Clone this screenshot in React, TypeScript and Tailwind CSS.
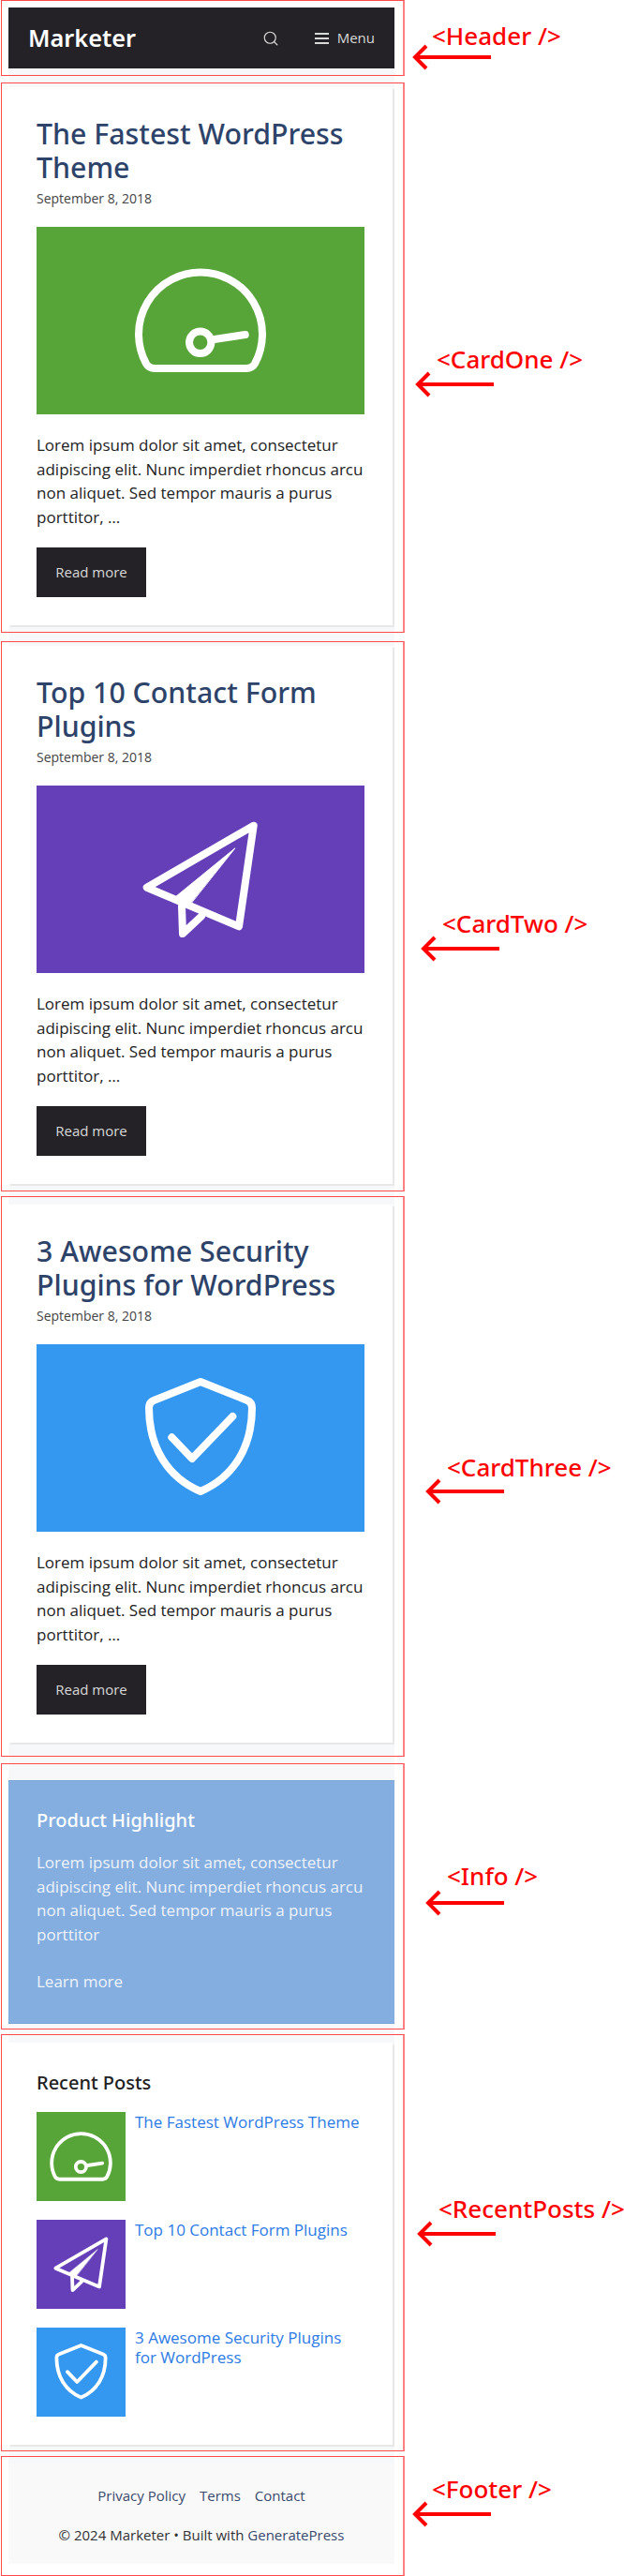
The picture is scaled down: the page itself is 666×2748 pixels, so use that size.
import React from 'react';
import { Search } from 'lucide-react';

const SpeedIcon = ({ className }: { className: string }) => (
  <svg viewBox="0 0 350 200" className={className} fill="none" stroke="#fff" strokeWidth="8" strokeLinecap="round" strokeLinejoin="round">
    <path d="M126 151H224Q230 151 233 146A66 66 0 1 0 117 146Q120 151 126 151Z" />
    <circle cx="174.7" cy="123.3" r="11.7" />
    <path d="M189.7 120L222.7 115" />
  </svg>
);

const PlaneIcon = ({ className }: { className: string }) => (
  <svg viewBox="0 0 350 200" className={className} fill="none" stroke="#fff" strokeWidth="8" strokeLinecap="round" strokeLinejoin="round">
    <path d="M231.7 42.7L117.7 108.7L216 150.3Z" />
    <path d="M155 128.7L156 158L176 139.3" />
    <path d="M211.7 67L148.3 118.7L164.3 126Z" fill="#fff" strokeWidth="1" />
  </svg>
);

const ShieldIcon = ({ className }: { className: string }) => (
  <svg viewBox="0 0 350 200" className={className} fill="none" stroke="#fff" strokeWidth="8" strokeLinecap="round" strokeLinejoin="round">
    <path d="M175 40L125 60Q120 62 120 68C120 110 140 142 175 157C210 142 230 110 230 68Q230 62 225 60Z" />
    <path d="M144.3 99.3L166 122L209.3 77" />
  </svg>
);

const posts = [
  { title: 'The Fastest WordPress Theme', bg: 'bg-[#57a438]', Icon: SpeedIcon },
  { title: 'Top 10 Contact Form Plugins', bg: 'bg-[#653fb7]', Icon: PlaneIcon },
  { title: '3 Awesome Security Plugins for WordPress', bg: 'bg-[#3498f0]', Icon: ShieldIcon },
];

const Header = () => (
  <header className="flex h-[65px] items-center justify-between bg-[#242226] pl-[21px] pr-[21px] text-[#d8d8d8]">
    <span className="font-['Noto_Sans',sans-serif] text-[25.3px] font-semibold text-white">Marketer</span>
    <div className="flex items-center">
      <Search className="mr-[38px] h-[18px] w-[18px]" strokeWidth={1.6} />
      <svg className="mr-[9px] h-[14px] w-[15px]" viewBox="0 0 15 14" fill="#d8d8d8">
        <rect y="1" width="15" height="2" />
        <rect y="6" width="15" height="2" />
        <rect y="11" width="15" height="2" />
      </svg>
      <span className="text-[15px]">Menu</span>
    </div>
  </header>
);

const Card = ({ title, bg, Icon, className }: { title: string; bg: string; Icon: React.FC<{ className: string }>; className: string }) => (
  <article className={`h-[574px] w-[410px] bg-white px-[30px] pt-[32px] shadow-[2px_2px_0_#e8e8e8] ${className}`}>
    <h2 className="font-['Noto_Sans',sans-serif] text-[30.3px] leading-[36px] font-medium text-[#2d4369]">{title}</h2>
    <p className="mt-[4px] text-[14px] leading-[21px] text-[#444]">September 8, 2018</p>
    <div className={`mt-[20px] h-[200px] w-[350px] ${bg}`}>
      <Icon className="h-full w-full" />
    </div>
    <p className="mt-[20px] text-[17px] leading-[25.5px] text-[#222]">
      Lorem ipsum dolor sit amet, consectetur adipiscing elit. Nunc imperdiet rhoncus arcu non aliquet. Sed tempor mauris a purus porttitor, …
    </p>
    <a className="mt-[20px] flex h-[53px] w-[117px] items-center justify-center bg-[#242226] text-[15px] text-[#d8d8d8]">Read more</a>
  </article>
);

const Info = () => (
  <section className="mt-[41px] h-[258px] bg-[#84aee0] px-[30px] pt-[27px] text-white shadow-[0_-1px_0_#7ba5d6,0_1px_0_#7ba5d6]">
    <h3 className="font-['Noto_Sans',sans-serif] text-[20px] leading-[30px] font-medium">Product Highlight</h3>
    <p className="mt-[17px] text-[17px] leading-[25.5px] text-[#eef3fa]">
      Lorem ipsum dolor sit amet, consectetur adipiscing elit. Nunc imperdiet rhoncus arcu non aliquet. Sed tempor mauris a purus porttitor
    </p>
    <p className="mt-[25px] text-[17px] leading-[25.5px] text-[#eef3fa]">Learn more</p>
  </section>
);

const RecentPosts = () => (
  <section className="mt-[21px] h-[429px] w-[410px] bg-white px-[30px] pt-[29px] shadow-[2px_2px_0_#e8e8e8]">
    <h3 className="font-['Noto_Sans',sans-serif] text-[20px] leading-[27px] font-medium text-[#222]">Recent Posts</h3>
    <ul className="mt-[18px] flex flex-col gap-5">
      {posts.map(({ title, bg, Icon }) => (
        <li key={title} className="flex gap-[10px]">
          <div className={`h-[95px] w-[95px] shrink-0 overflow-hidden ${bg}`}>
            <Icon className="h-[95px] w-[166.25px] max-w-none -translate-x-[35.6px]" />
          </div>
          <a className="text-[17px] leading-[21px] text-[#2c7be5]">{title}</a>
        </li>
      ))}
    </ul>
  </section>
);

const Footer = () => (
  <footer className="mt-[20px] flex h-[107px] flex-col items-center bg-[#f9f9fa] pt-[23px] text-[15px] leading-[22px] text-[#333]">
    <div className="flex gap-[15px] text-[#3a4a6b]">
      <a>Privacy Policy</a>
      <a>Terms</a>
      <a>Contact</a>
    </div>
    <p className="mt-[20px]">
      © 2024 Marketer • Built with <a className="text-[#3a4a6b]">GeneratePress</a>
    </p>
  </footer>
);

const notes = [
  { label: '<Header />', top: 0, height: 81, labelX: 461, labelY: 38, arrowX: 441, arrowY: 61 },
  { label: '<CardOne />', top: 88, height: 587, labelX: 466, labelY: 383, arrowX: 444, arrowY: 410 },
  { label: '<CardTwo />', top: 684, height: 587, labelX: 472, labelY: 985, arrowX: 450, arrowY: 1012 },
  { label: '<CardThree />', top: 1276, height: 598, labelX: 477, labelY: 1565, arrowX: 455, arrowY: 1591 },
  { label: '<Info />', top: 1881, height: 284, labelX: 477, labelY: 2001, arrowX: 455, arrowY: 2030 },
  { label: '<RecentPosts />', top: 2170, height: 445, labelX: 468, labelY: 2356, arrowX: 446, arrowY: 2383 },
  { label: '<Footer />', top: 2620, height: 128, labelX: 461, labelY: 2655, arrowX: 441, arrowY: 2682 },
];

export default function App() {
  return (
    <div className="relative h-[2748px] w-[666px] overflow-hidden bg-white font-['Open_Sans',sans-serif]">
      <div className="mt-2 ml-[9px] w-[412px] bg-[#f7f8f9]">
        <Header />
        <Card {...posts[0]} className="mt-5" />
        <Card {...posts[1]} className="mt-[22px]" />
        <Card {...posts[2]} className="mt-[22px]" />
        <Info />
        <RecentPosts />
        <Footer />
      </div>
      {/* annotation overlay */}
      {notes.map((n) => (
        <React.Fragment key={n.label}>
          <div className="absolute left-[1px] w-[431px] border border-r-2 border-[#ff4a4a] border-r-[#ff8080]" style={{ top: n.top, height: n.height }} />
          <span className="absolute font-['Noto_Sans',sans-serif] text-[26px] leading-[40px] font-medium whitespace-nowrap text-[#ff0000]" style={{ left: n.labelX, top: n.labelY - 20 }}>
            {n.label}
          </span>
          <svg className="absolute" width="90" height="30" viewBox="0 0 90 30" style={{ left: n.arrowX - 2, top: n.arrowY - 15 }} fill="none" stroke="#ff0000" strokeWidth="4">
            <path d="M85 15H4M16 3L4 15L16 27" />
          </svg>
        </React.Fragment>
      ))}
    </div>
  );
}
